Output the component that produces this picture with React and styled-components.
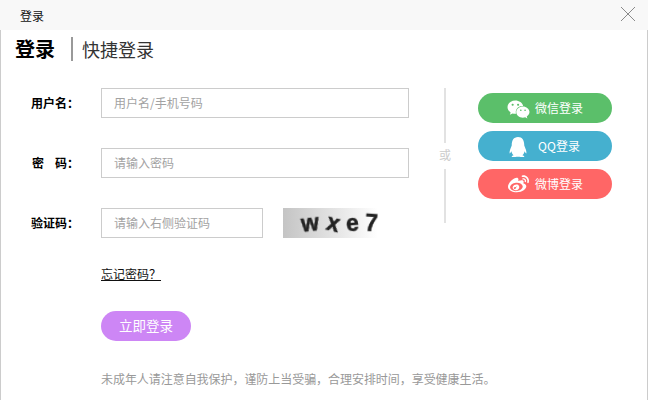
import React from 'react';
import styled, { createGlobalStyle } from 'styled-components';
import { FaWeixin, FaQq, FaWeibo } from 'react-icons/fa';

const Global = createGlobalStyle`
html, body {
    margin: 0;
    padding: 0;
    background: #fff;
    font-family: "Noto Sans CJK SC", "Liberation Sans", sans-serif;
}
`;

const captchaChars = [
    { c: 'w', rotate: -6, gap: 0 },
    { c: 'x', rotate: 14, gap: 8 },
    { c: 'e', rotate: -4, gap: 6 },
    { c: '7', rotate: 4, gap: 7 },
];

const App = () => {
    return (
        <Dialog>
            <Global />
            <TitleBar>
                <TitleText>登录</TitleText>
                <Close viewBox="0 0 16 16">
                    <path d="M1 1L15 15M15 1L1 15" stroke="#8a8a8a" strokeWidth="1" fill="none" />
                </Close>
            </TitleBar>
            <Body>
                <Tabs>
                    <ActiveTab>登录</ActiveTab>
                    <Tab>快捷登录</Tab>
                </Tabs>
                <Main>
                    <Form>
                        <Row>
                            <Label>用户名：</Label>
                            <Input placeholder="用户名/手机号码" />
                        </Row>
                        <Row>
                            <Label>密&nbsp;&nbsp;&nbsp;&nbsp;码：</Label>
                            <Input placeholder="请输入密码" />
                        </Row>
                        <Row>
                            <Label>验证码：</Label>
                            <Input $short placeholder="请输入右侧验证码" />
                            <Captcha>
                                {captchaChars.map(ch => (
                                    <CaptchaChar key={ch.c} $gap={ch.gap} style={{ transform: `rotate(${ch.rotate}deg)` }}>{ch.c}</CaptchaChar>
                                ))}
                            </Captcha>
                        </Row>
                        <Forgot href="#">忘记密码？</Forgot>
                        <Submit>立即登录</Submit>
                        <Notice>未成年人请注意自我保护，谨防上当受骗，合理安排时间，享受健康生活。</Notice>
                    </Form>
                    <Or>
                        <OrLine />
                        <OrText>或</OrText>
                        <OrLine />
                    </Or>
                    <Social>
                        <SocialBtn $color="#5bbf6a"><WxIcon />微信登录</SocialBtn>
                        <SocialBtn $color="#45b0cf"><QqIcon />QQ登录</SocialBtn>
                        <SocialBtn $color="#ff6666"><WbIcon />微博登录</SocialBtn>
                    </Social>
                </Main>
            </Body>
        </Dialog>
    );
};

export default App;

const Dialog = styled.div`
width: 648px;
height: 400px;
overflow: hidden;
display: flex;
flex-direction: column;
`;

const TitleBar = styled.div`
height: 30px;
flex: none;
box-sizing: border-box;
display: flex;
align-items: center;
justify-content: space-between;
padding: 0 12px 0 20px;
background: #f8f8f8;
`;

const TitleText = styled.span`
font-size: 12px;
color: #111;
`;

const Close = styled.svg`
width: 16px;
height: 16px;
margin-bottom: 2px;
`;

const Body = styled.div`
flex: 1;
box-sizing: border-box;
border-left: 1px solid #ccc;
border-right: 1px solid #ccc;
padding: 7px 0 0 14px;
`;

const Tabs = styled.div`
display: flex;
align-items: center;
height: 24px;
`;

const ActiveTab = styled.div`
font-size: 20px;
font-weight: 700;
line-height: 24px;
color: #000;
padding-right: 16px;
border-right: 2px solid #999;
`;

const Tab = styled.div`
font-size: 18px;
line-height: 24px;
color: #333;
padding-left: 9px;
`;

const Main = styled.div`
display: flex;
margin-top: 27px;
`;

const Form = styled.div`
width: 429px;
flex: none;
display: flex;
flex-direction: column;
`;

const Row = styled.div`
display: flex;
align-items: center;
height: 30px;
margin-bottom: 30px;
&:nth-child(3) {
    margin-bottom: 0;
}
`;

const Label = styled.label`
width: 64px;
margin-right: 22px;
padding-bottom: 2px;
text-align: right;
font-size: 12px;
font-weight: 700;
color: #000;
white-space: nowrap;
`;

const Input = styled.input`
width: ${p => (p.$short ? '162px' : '308px')};
height: 30px;
box-sizing: border-box;
border: 1px solid #ccc;
outline: none;
padding: 0 12px 2px;
font-family: inherit;
font-size: 12px;
&::placeholder {
    color: #a2a2a2;
    opacity: 1;
}
`;

const Captcha = styled.div`
width: 95px;
height: 30px;
margin-left: 20px;
padding-left: 18px;
box-sizing: border-box;
background: linear-gradient(90deg, #c4c4c4, #fff);
display: flex;
align-items: center;
`;

const CaptchaChar = styled.span`
display: block;
margin-left: ${p => p.$gap}px;
font-family: "Liberation Sans", sans-serif;
font-weight: 700;
font-size: 23px;
line-height: 22px;
color: #222;
-webkit-text-stroke: 0.5px #222;
filter: blur(0.6px);
`;

const Forgot = styled.a`
align-self: flex-start;
margin: 28px 0 0 86px;
font-size: 12px;
line-height: 16px;
color: #111;
text-decoration: underline;
`;

const Submit = styled.button`
width: 90px;
height: 30px;
margin: 29px 0 0 86px;
border: none;
border-radius: 15px;
padding: 0 0 3px;
background: #cd86f5;
color: #fff;
font-family: inherit;
font-size: 13.5px;
`;

const Notice = styled.p`
margin: 29px 0 0 86px;
font-size: 12px;
line-height: 18px;
letter-spacing: -0.05px;
color: #999;
white-space: nowrap;
`;

const Or = styled.div`
width: 2px;
height: 135px;
flex: none;
display: flex;
flex-direction: column;
align-items: center;
`;

const OrLine = styled.div`
flex: 1;
width: 2px;
background: #e2e2e2;
`;

const OrText = styled.div`
padding: 4px 0 6px;
font-size: 12px;
line-height: 16px;
color: #ccc;
white-space: nowrap;
`;

const Social = styled.div`
margin: 5px 0 0 32px;
display: flex;
flex-direction: column;
gap: 8px;
`;

const SocialBtn = styled.button`
position: relative;
width: 134px;
height: 30px;
border: none;
border-radius: 15px;
padding: 0 0 2px 28px;
background: ${p => p.$color};
color: #fff;
font-family: inherit;
font-size: 12px;
`;

const WxIcon = styled(FaWeixin)`
position: absolute;
left: 29px;
top: 5px;
font-size: 23px;
`;

const QqIcon = styled(FaQq)`
position: absolute;
left: 30px;
top: 6px;
font-size: 20px;
`;

const WbIcon = styled(FaWeibo)`
position: absolute;
left: 30px;
top: 5px;
font-size: 21px;
`;
